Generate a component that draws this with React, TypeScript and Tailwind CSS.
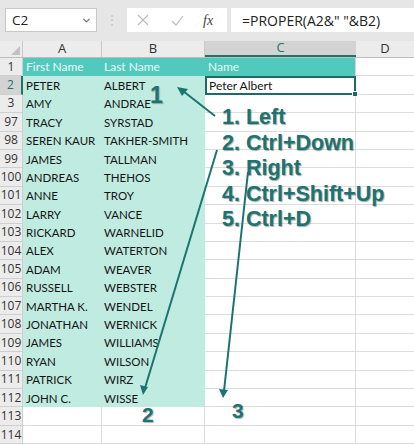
import { ChevronDown } from 'lucide-react';

type Row = { n: string; a?: string; b?: string };

const rows: Row[] = [
  { n: '2', a: 'PETER', b: 'ALBERT' },
  { n: '3', a: 'AMY', b: 'ANDRAE' },
  { n: '97', a: 'TRACY', b: 'SYRSTAD' },
  { n: '98', a: 'SEREN KAUR', b: 'TAKHER-SMITH' },
  { n: '99', a: 'JAMES', b: 'TALLMAN' },
  { n: '100', a: 'ANDREAS', b: 'THEHOS' },
  { n: '101', a: 'ANNE', b: 'TROY' },
  { n: '102', a: 'LARRY', b: 'VANCE' },
  { n: '103', a: 'RICKARD', b: 'WARNELID' },
  { n: '104', a: 'ALEX', b: 'WATERTON' },
  { n: '105', a: 'ADAM', b: 'WEAVER' },
  { n: '106', a: 'RUSSELL', b: 'WEBSTER' },
  { n: '107', a: 'MARTHA K.', b: 'WENDEL' },
  { n: '108', a: 'JONATHAN', b: 'WERNICK' },
  { n: '109', a: 'JAMES', b: 'WILLIAMS' },
  { n: '110', a: 'RYAN', b: 'WILSON' },
  { n: '111', a: 'PATRICK', b: 'WIRZ' },
  { n: '112', a: 'JOHN C.', b: 'WISSE' },
  { n: '113' },
  { n: '114' },
];

const steps = ['1. Left', '2. Ctrl+Down', '3. Right', '4. Ctrl+Shift+Up', '5. Ctrl+D'];

function FormulaBar() {
  return (
    <div className="h-[41px] bg-[#e6e6e6] flex items-start pt-[8px] font-['Open_Sans',sans-serif]">
      <div className="ml-[5px] w-[92px] h-[24px] bg-white border border-[#c8c8c8] flex items-center justify-between pl-[6px] pr-[4px] text-[13.5px] text-[#222]">
        <span>C2</span>
        <ChevronDown size={11} strokeWidth={3} className="text-[#777]" />
      </div>
      <div className="w-[30px] h-[24px] flex items-center justify-center text-[#c4c4c4] text-[12px]">⋮</div>
      <div className="w-[100px] h-[24px] bg-white flex items-center text-[#bdbdbd]">
        <svg width="12" height="12" viewBox="0 0 12 12" className="ml-[10px]">
          <path d="M1 1 L11 11 M11 1 L1 11" stroke="currentColor" strokeWidth="1.2" fill="none" />
        </svg>
        <svg width="13" height="11" viewBox="0 0 13 11" className="ml-[22px]">
          <path d="M1 6 L5 10 L12 1" stroke="currentColor" strokeWidth="1.2" fill="none" />
        </svg>
        <span className="ml-[19px] text-[#444] italic font-['Liberation_Serif',serif] text-[14px]">fx</span>
      </div>
      <div className="ml-[4px] flex-1 h-[24px] bg-white flex items-center pl-[11px] text-[14px] text-[#222]">
        =PROPER(A2&amp;" "&amp;B2)
      </div>
    </div>
  );
}

function ColumnHeaders() {
  const base = 'h-full flex items-center justify-center border-r border-[#c9c9c9] text-[13px] text-[#333]';
  return (
    <div className="h-[17px] flex bg-[#ececec] border-b border-[#bdbdbd] font-['Open_Sans',sans-serif]">
      <div className="w-[23px] h-full border-r border-[#c9c9c9] flex items-end justify-end pr-[2px] pb-[2px]">
        <div className="w-0 h-0 border-l-[9px] border-l-transparent border-b-[9px] border-b-[#c2c2c2]" />
      </div>
      <div className={`w-[79px] ${base}`}>A</div>
      <div className={`w-[103px] ${base}`}>B</div>
      <div className="w-[151px] h-full flex items-center justify-center bg-[#d3d3d3] border-b-2 border-[#1f7565] text-[13px] text-[#1f7565]">C</div>
      <div className="flex-1 h-full flex items-center justify-center text-[13px] text-[#333]">D</div>
    </div>
  );
}

export default function App() {
  return (
    <div className="relative w-[414px] h-[445px] overflow-hidden bg-white font-['Lato',sans-serif]">
      <FormulaBar />
      <ColumnHeaders />

      {/* row 1: table header */}
      <div className="h-[18.4px] flex text-[12px]">
        <div className="w-[23px] h-full bg-[#ececec] border-r border-b border-[#cfcfcf] flex items-center justify-center text-[12px] text-[#333] font-['Open_Sans',sans-serif]">1</div>
        <div className="w-[79px] h-full bg-[#52c9bd] text-[#eafaf7] flex items-center pl-[3px]">First Name</div>
        <div className="w-[103px] h-full bg-[#52c9bd] text-[#eafaf7] flex items-center pl-[2px]">Last Name</div>
        <div className="w-[151px] h-full bg-[#52c9bd] text-[#eafaf7] flex items-center pl-[3px] border-r border-[#d6d6d6]">Name</div>
        <div className="flex-1 h-full border-b border-[#dcdcdc]" />
      </div>

      {rows.map((r, i) => {
        const inTable = !!r.a;
        const active = i === 0;
        return (
          <div key={r.n} className="h-[18.4px] flex text-[11.5px] text-[#141414]">
            <div
              className={
                active
                  ? 'w-[23px] h-full bg-[#d3d3d3] border-r-2 border-b border-r-[#1f7565] border-b-[#cfcfcf] flex items-center justify-center text-[12px] text-[#1f7565] font-["Open_Sans",sans-serif]'
                  : 'w-[23px] h-full bg-[#ececec] border-r border-b border-[#cfcfcf] flex items-center justify-center text-[12px] text-[#333] font-["Open_Sans",sans-serif]'
              }
            >
              {r.n}
            </div>
            {inTable ? (
              <>
                <div className="w-[79px] h-full bg-[#c0ebe0] flex items-center pl-[3px]">{r.a}</div>
                <div className="w-[103px] h-full bg-[#c0ebe0] flex items-center pl-[2px]">{r.b}</div>
              </>
            ) : (
              <>
                <div className="w-[79px] h-full border-r border-b border-[#dcdcdc]" />
                <div className="w-[103px] h-full border-r border-b border-[#dcdcdc]" />
              </>
            )}
            {active ? (
              <div className="relative w-[151px] h-full border-2 border-[#1d6b68] flex items-center pl-[2px] text-[12px]">
                Peter Albert
                <div className="absolute -right-[4px] -bottom-[4px] w-[6px] h-[6px] bg-[#1d6b68] border border-white" />
              </div>
            ) : (
              <div className="w-[151px] h-full border-r border-b border-[#dcdcdc]" />
            )}
            <div className="flex-1 h-full border-b border-[#dcdcdc]" />
          </div>
        );
      })}

      {/* annotation arrows */}
      <svg className="absolute top-0 left-0 pointer-events-none" width="414" height="445" viewBox="0 0 414 445">
        <g stroke="#1b7472" strokeWidth="2" fill="none">
          <line x1="215" y1="116" x2="183" y2="91" />
          <line x1="217" y1="150" x2="145" y2="388" />
          <line x1="248" y1="172" x2="224" y2="391" />
        </g>
        <g fill="#1b7472">
          <polygon points="177,87 188,89 182,96" />
          <polygon points="143,395 140,385 148,387" />
          <polygon points="223,398 219,389 228,390" />
        </g>
      </svg>

      <div className="absolute left-[222px] top-[105px] font-['Liberation_Sans',sans-serif] font-bold text-[21.5px] leading-[25.5px] text-[#1b7472] [text-shadow:1px_1px_1px_rgba(0,0,0,0.35)]">
        {steps.map((s) => (
          <div key={s}>{s}</div>
        ))}
      </div>

      <div className="absolute left-[150px] top-[84px] font-['Liberation_Sans',sans-serif] font-bold text-[23px] leading-none text-[#1b7472] [text-shadow:1px_1px_1px_rgba(0,0,0,0.3)]">1</div>
      <div className="absolute left-[142px] top-[404px] font-['Liberation_Sans',sans-serif] font-bold text-[21px] leading-none text-[#1b7472] [text-shadow:1px_1px_1px_rgba(0,0,0,0.3)]">2</div>
      <div className="absolute left-[232px] top-[400px] font-['Liberation_Sans',sans-serif] font-bold text-[21px] leading-none text-[#1b7472] [text-shadow:1px_1px_1px_rgba(0,0,0,0.3)]">3</div>
    </div>
  );
}
